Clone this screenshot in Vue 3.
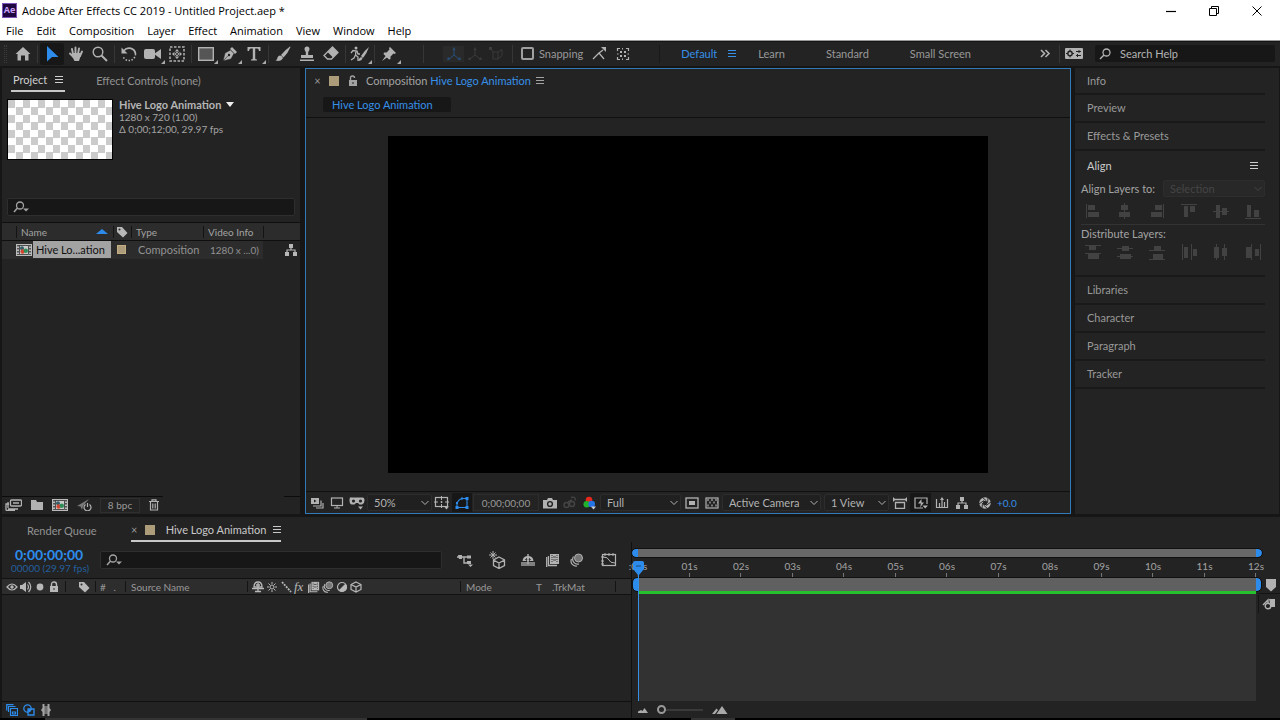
<script setup>
import { h, ref } from 'vue'

const glyphs = {
  logo: [15, 15, '<rect width="15" height="15" fill="#1f0740"/><rect x=".5" y=".5" width="14" height="14" fill="none" stroke="#7d55b8"/>'],
  minimize: [12, 12, '<path d="M1 6.500H11" stroke-width="1.200"/>'],
  restore: [12, 12, '<path d="M1.500 3.500H8.500V10.500H1.500ZM3.500 3.500V1.500H10.500V8.500H8.500"/>'],
  close: [12, 12, '<path d="M1.500 1.500L10.500 10.500M10.500 1.500L1.500 10.500"/>'],
  home: [16, 16, '<path d="M8 1L15.500 8H13.500V14.500H10V9.500H6V14.500H2.500V8H.5Z" fill="currentColor" stroke="none"/>'],
  arrow: [16, 16, '<path d="M3 0V15.500L8 11H14.500Z" fill="currentColor" stroke="none"/>'],
  hand: [16, 16, '<path d="M5 8L4 3M7.500 7.500V1.500M10 8L11 2.500M12 10L14 5.500M5.500 11L2 7.500" stroke-width="1.900" stroke-linecap="round"/><path d="M3.500 9L4.500 7H12.500L13 9L11 15H6.500Z" fill="currentColor" stroke="none"/>'],
  zoom: [16, 16, '<circle cx="6" cy="6" r="4.800" stroke-width="1.400"/><path d="M9.500 9.500L15 15" stroke-width="2"/>'],
  rotate: [16, 16, '<path d="M3 4.500A6.500 6.500 0 0 1 14.500 8" stroke-width="1.700"/><path d="M14.500 8A6.500 6.500 0 0 1 2 10.500" stroke-width="1.500" stroke-dasharray="1.500 1.500"/><path d="M.5 1.500V7.500H6.500Z" fill="currentColor" stroke="none"/>'],
  camera: [18, 16, '<rect x="0" y="3" width="11" height="10" rx="2" fill="currentColor" stroke="none"/><path d="M10 8L17 3V13Z" fill="currentColor" stroke="none"/>'],
  anchor: [16, 16, '<rect x="1" y="1" width="14" height="14" stroke-dasharray="2.500 1.500" stroke-width="1.500"/><path d="M8 3L10.200 5.500H5.800ZM8 13L10.200 10.500H5.800ZM3 8L5.500 5.800V10.200ZM13 8L10.500 5.800V10.200Z" fill="currentColor" stroke="none"/><circle cx="8" cy="8" r="1.500"/>'],
  rect: [16, 16, '<rect x=".7" y="1.700" width="14.600" height="12.600" fill="#555" stroke-width="1.400"/>'],
  pen: [16, 16, '<path d="M1 15L3 7L8.500 4L12 7.500L9 13L1 15L6 9.800" fill="currentColor" stroke="#232323" stroke-width=".6"/><path d="M10 1L15 6L13 8L8 3Z" fill="currentColor" stroke="none"/><circle cx="7" cy="9" r="1.200" fill="#232323" stroke="none"/>'],
  type: [16, 16, '<path d="M1.500 1H14.500V5H13Q12.700 2.600 11 2.600H9.200V12.500Q9.200 13.500 11 13.500V14.500H5V13.500Q6.800 13.500 6.800 12.500V2.600H5Q3.300 2.600 3 5H1.500Z" fill="currentColor" stroke="none"/>'],
  brush: [16, 16, '<path d="M15 .5Q10 4 6 9L8.500 11.500Q13 7 15.500 1Z" fill="currentColor" stroke="none"/><path d="M5 9.500Q8 10 7.800 12.500Q6 16 .5 14.500Q2.500 13.500 2.500 11.500Q3.300 9.700 5 9.500" fill="currentColor" stroke="none"/>'],
  stamp: [16, 16, '<path d="M5.500 3Q5.500 .5 8 .5T10.500 3Q10.500 4.500 9.200 6V9H14V12H2V9H6.800V6Q5.500 4.500 5.500 3M1 13.500H15V15H1Z" fill="currentColor" stroke="none"/>'],
  eraser: [16, 16, '<path d="M9.500 1L15 6.500L8.500 13H4.500L1 9.500Z" stroke-width="1.300"/><path d="M9.500 1L15 6.500L10 11.500L4.500 6Z" fill="currentColor" stroke="none"/>'],
  roto: [20, 16, '<circle cx="6" cy="2" r="1.500" fill="currentColor" stroke="none"/><path d="M1 7L3 4.500L7 5L8 8H10M6 5L5.500 9L8 11V15M5.500 9L4 12L1 14" stroke-width="1.300"/><path d="M19 1Q14 5 11 10L13 12Q17 7 19 1M11 11Q9 12 8 15Q12 15 12.500 12" fill="currentColor" stroke="none"/>'],
  pin: [16, 16, '<path d="M9 1L15 7L13.500 8L12.500 7.500L9.500 10.500L9.500 13L8 13.500L2.500 8L3 6.500H5.500L8.500 3.500L8 2ZM4.500 10L6 11.500L1 15Z" fill="currentColor" stroke="none"/>'],
  axis: [16, 16, '<path d="M8 3V9L3 13M8 9L13 13"/><path d="M6.500 4L8 1L9.500 4ZM1 14L2 11L4.500 13.500ZM15 14L14 11L11.500 13.500Z" fill="currentColor" stroke="none"/>'],
  viewaxis: [16, 16, '<path d="M2.500 2.500L5 6V13H10L14 9.500V3.500L10 6H5M10 6V13" stroke-width=".9"/><path d="M1 1H4V4H1Z" fill="currentColor" stroke="none"/>'],
  snap: [16, 16, '<path d="M2 13L8 7L13 13M8 7L12 4" stroke-width="1.300"/><path d="M10 1H15V6Z" fill="currentColor" stroke="none"/>'],
  snapbox: [16, 16, '<path d="M2.500 5V2.500H5M11 2.500H13.500V5M13.500 11V13.500H11M5 13.500H2.500V11" stroke-width="1.200"/><path d="M7.500 2V3.500M7.500 12.500V14M2 8H3.500M12.500 8H14"/><path d="M5 5H7V7H5ZM9 5H11V7H9ZM5 9H7V11H5ZM9 9H11V11H9Z" fill="currentColor" stroke="none"/>'],
  menu: [12, 12, '<path d="M2 2.500H10M2 5.500H10M2 8.500H10" stroke-width="1.200"/>'],
  more: [12, 12, '<path d="M2 2L5.500 5.500L2 9M6.500 2L10 5.500L6.500 9" stroke-width="1.600"/>'],
  settings: [18, 12, '<rect width="18" height="11" rx="1" fill="currentColor" stroke="none"/><circle cx="5" cy="5.500" r="2.200" stroke="#232323" stroke-width="1.400"/><path d="M5 1.500V3M5 8V9.500M1 5.500H3M7 5.500H9M11 3.500H16M11 7.500H16M14 2V5M12.500 6V9" stroke="#232323"/>'],
  search: [12, 12, '<circle cx="7.500" cy="4.500" r="3.500" stroke-width="1.300"/><path d="M5 7L1 11" stroke-width="1.500"/>'],
  searchmenu: [18, 12, '<circle cx="7" cy="4.500" r="3.500" stroke-width="1.300"/><path d="M4.500 7L1 11" stroke-width="1.500"/><path d="M10 7.500H16L13 10.500Z" fill="currentColor" stroke="none"/>'],
  lock: [12, 12, '<rect x="2" y="5" width="8" height="6" fill="currentColor" stroke="none"/><path d="M3.500 5V3Q3.500 1 5.500 1Q7.500 1 7.500 3" stroke-width="1.400"/><path d="M6 7V9" stroke="#232323"/>'],
  padlock: [12, 12, '<rect x="2" y="5" width="8" height="6" fill="currentColor" stroke="none"/><path d="M3.500 5V3.500Q3.500 1 6 1T8.500 3.500V5" stroke-width="1.400"/><path d="M6 7V9" stroke="#2d2d2d"/>'],
  tag: [12, 12, '<path d="M1 1H6L11.500 7L7 11.500L1 6Z" fill="currentColor" stroke="none"/><circle cx="3.500" cy="3.500" r="1" fill="#2d2d2d" stroke="none"/>'],
  film: [16, 12, '<rect x=".5" y=".5" width="15" height="11" fill="#bbb" stroke="#bbb"/><path d="M2 1V11M14 1V11" stroke="#333" stroke-width="1.500" stroke-dasharray="1.500 1.500"/><rect x="3.500" y="1.500" width="9" height="9" fill="#ccc" stroke="#333" stroke-width=".8"/><circle cx="6" cy="4.300" r="2" fill="#35606b" stroke="none"/><circle cx="6.600" cy="7.500" r="2.200" fill="#d4442f" stroke="none"/><circle cx="9.800" cy="6.800" r="2.200" fill="#2f8f5b" stroke="none"/>'],
  tree: [14, 12, '<path d="M5 0H9V4H5ZM1 8H5V12H1ZM9 8H13V12H9Z" fill="currentColor" stroke="none"/><path d="M7 4V6M3 8V6H11V8" stroke-width="1.200"/>'],
  interpret: [17, 12, '<rect x="5.500" y="1" width="11" height="6" rx="1" stroke-width="1.300"/><path d="M8 4H14M1 11.500V5H4M3 10H13M1 11.500H10M3 9V3" stroke-width="1.300"/>'],
  folder: [14, 12, '<path d="M1 1H6L7 3H13V11H1Z" fill="currentColor" stroke="none"/>'],
  plane: [16, 12, '<path d="M1 7L13 0L7 7L6 11L4.500 7.500Z" fill="currentColor" stroke="none" opacity=".6"/><path d="M9.500 5.500A3.500 3.500 0 1 0 13.500 5.500M11.500 4V8" stroke-width="1.200"/>'],
  trash: [12, 12, '<path d="M1 2.500H11M4 2V.8H8V2M2.500 3V11H9.500V3M4.800 4.500V9.500M7.200 4.500V9.500" stroke-width="1.200"/>'],
  preview: [14, 12, '<path d="M1 1H9V7H1Z" fill="currentColor" stroke="none"/><path d="M4 2.500L6.500 4L4 5.500" fill="#232323" stroke="none"/><path d="M3 9H11V3.500M6 11H13V6" stroke-width="1.200"/>'],
  monitor: [14, 12, '<rect x="1.500" y="1" width="11" height="7.500" stroke-width="1.200"/><path d="M7 9V11M4 11H10"/>'],
  goggles: [16, 14, '<path d="M2.500 1.500H13.500Q15.500 1.500 15.500 4.500T13 8.500H10.500L9 7H7L5.500 8.500H3Q.5 8.500 .5 4.500T2.500 1.500" fill="currentColor" stroke="none"/><circle cx="4.500" cy="5" r="1.600" fill="#232323" stroke="none"/><circle cx="11.500" cy="5" r="1.600" fill="#232323" stroke="none"/><path d="M9 10.500H14L11.500 13.500Z" fill="currentColor" stroke="none"/>'],
  chevron: [10, 10, '<path d="M1.500 3L5 6.500L8.500 3"/>'],
  grid: [16, 14, '<rect x="1.500" y="1.500" width="12" height="9" stroke-width="1.200"/><path d="M7.500 0V4M7.500 8V12M0 6H4M11 6H15M7.500 5V7M6.500 6H8.500" /><path d="M10 10.500H15L12.500 13.500Z" fill="currentColor" stroke="none"/>'],
  mask: [16, 14, '<path d="M3 11.500V8Q4 3 9 2.500H13V11.500Z" stroke-width="1.100"/><path d="M1.500 10H4.500V13H1.500ZM11.500 10H14.500V13H11.500ZM11.500 1H14.500V4H11.500ZM7 1.500H9V3.500H7ZM2 6H4V8H2Z" fill="currentColor" stroke="none"/>'],
  snapshot: [14, 12, '<path d="M0 3H4L5 1H9L10 3H14V11.500H0Z" fill="currentColor" stroke="none"/><circle cx="7" cy="7" r="2.400" stroke="#232323" stroke-width="1.400"/>'],
  showsnap: [14, 14, '<circle cx="3.500" cy="9" r="2.500" stroke-width="1.500"/><circle cx="9" cy="8" r="2.500" stroke-width="1.500"/><path d="M5 6L9 4M8 1.500Q12.500 0 12.500 4.500" stroke-width="1.500"/>'],
  channels: [14, 14, '<circle cx="6" cy="4" r="3.300" fill="#e8281c" stroke="none"/><circle cx="3.800" cy="8.300" r="3.300" fill="#21b12c" stroke="none"/><circle cx="8.700" cy="8" r="3.300" fill="#2673e8" stroke="none"/><path d="M8 10.500H13L10.500 13.500Z" fill="#ccc" stroke="none"/>'],
  region: [14, 12, '<rect x="1" y="1" width="12" height="10" stroke-width="1.300"/><rect x="4" y="4" width="6" height="4" fill="currentColor" stroke="none"/>'],
  checker: [14, 12, '<rect x="1" y="1" width="12" height="10" stroke-width="1.200"/><path d="M2 3H12M4 5.500H13M2 8.500H12" stroke-width="2" stroke-dasharray="2 2" opacity=".6"/>'],
  aspect: [16, 12, '<path d="M2 2.500H14M3.500 5.500H12.500V11.500H3.500Z" stroke-width="1.300"/><path d="M1 0V5L3.500 2.500ZM15 0V5L12.500 2.500Z" fill="currentColor" stroke="none"/>'],
  fast: [14, 12, '<path d="M13 7V1H1V11H9" stroke-width="1.200"/><path d="M7.500 2L4 6.500H7L6 10.500L10 5.500H7.500ZM8.500 8.500H14L11.200 11.500Z" fill="currentColor" stroke="none"/>'],
  chart: [14, 12, '<path d="M1.500 2V10.500H12.500V2M4.500 6V10M9.500 5V10M7 2V10" stroke-width="1.200"/><path d="M5 3L7 0L9 3Z" fill="currentColor" stroke="none"/>'],
  exposure: [14, 14, '<circle cx="7" cy="7" r="4" stroke-width="3.500"/><path d="M4 1L8.500 5M10 1.500L9.500 7M13 6L8 9.500M10 13L5.500 9M4 12.500L4.500 7M1 8L6 4.500" stroke="#232323" stroke-width=".9"/>'],
  flow: [18, 14, '<path d="M1 4H8M8 4V10H13M8 4H13" stroke-width="1.400"/><path d="M2 2H6V6H3ZM11 2.500H15V5.500H11ZM11 8H15V11H11ZM12 11.500H17L14.500 14Z" fill="currentColor" stroke="none"/>'],
  draft: [18, 18, '<path d="M5 0V8M1 4H9M2.500 1.500L7.500 6.500M7.500 1.500L2.500 6.500" /><path d="M11 6L16.500 9V14.500L11 17.500L5.500 14.500V9ZM5.500 9L11 12L16.500 9M11 12V17" stroke-width="1.300"/>'],
  shy: [16, 14, '<path d="M1 9H15V13H1Z" fill="currentColor" stroke="none" opacity=".65"/><path d="M2.500 8Q3 3 8 3T13.500 8Z" fill="currentColor" stroke="none"/><path d="M5 6.500H11M6.500 8V5M9.500 8V5" stroke="#333" stroke-width=".8"/><path d="M8 1V11" stroke-width="1.400"/>'],
  blend: [14, 14, '<path d="M4 1H13V11H4Z" fill="currentColor" stroke="none"/><path d="M2.500 3V12.500H11M.7 4V14" stroke-width="1.300"/><path d="M6 2V10M11 2V10" stroke="#333" stroke-dasharray="1 1"/><path d="M7 4H10M7 7H10" stroke="#444"/>'],
  motion: [14, 14, '<circle cx="8.500" cy="5" r="4" fill="#777"/><path d="M3.500 3.500A5 5 0 0 0 9 11M1.500 6A5 5 0 0 0 7 13" stroke-width="1.200"/>'],
  graph: [16, 14, '<rect x="1.500" y="1.500" width="13" height="11" stroke-width="1.200"/><path d="M2 4Q7 4 8 7T14 10M4 0V3M8 0V3M12 0V3M0 4H3M0 8H3M0 11H3"/>'],
  eye: [12, 12, '<path d="M1 6Q6 0 11 6Q6 12 1 6Z" stroke-width="1.200"/><circle cx="6" cy="6" r="1.700" fill="currentColor" stroke="none"/>'],
  speaker: [12, 12, '<path d="M0 4H2L6 1V11L2 8H0Z" fill="currentColor" stroke="none"/><path d="M7.500 3.500Q9.500 6 7.500 8.500M8.500 1Q13 6 8.500 11" stroke-width="1.200"/>'],
  dot: [12, 12, '<circle cx="6" cy="6" r="3.400" fill="currentColor" stroke="none"/>'],
  shysmall: [12, 12, '<path d="M2 6Q2 1 6 1T10 6Z" stroke-width="1.300"/><path d="M0 7.500H12M6 2V11M3 10.500H9M4 4H8" stroke-width="1.300"/>'],
  sun: [12, 12, '<circle cx="6" cy="6" r="2"/><path d="M6 1V3M6 9V11M1 6H3M9 6H11M2.500 2.500L4 4M8 8L9.500 9.500M9.500 2.500L8 4M4 8L2.500 9.500"/>'],
  slash: [12, 12, '<path d="M2 1L11 11" stroke-width="1.800" stroke-dasharray="2 1"/>'],
  contrast: [12, 12, '<circle cx="6" cy="6" r="4.500" stroke-width="1.200"/><path d="M9.500 2.500A4.800 4.800 0 0 1 2.500 9.500Z" fill="currentColor" stroke="none"/>'],
  cube: [12, 12, '<path d="M6 1L11 3.500V8.500L6 11L1 8.500V3.500ZM1 3.500L6 6L11 3.500M6 6V11" stroke-width="1.200"/>'],
  layers: [12, 12, '<path d="M4.500 4.500H11.500V11.500H4.500ZM2.500 8V2.500H9.500M.7 6.500V.7H7.500" stroke-width="1.200"/><path d="M6.500 8H9.500V10H6.500Z" stroke-width="1.200"/>'],
  modes: [12, 12, '<circle cx="4.500" cy="4.500" r="3.700" stroke-width="1.300"/><path d="M5 5H11V11H5Z" stroke-width="1.300"/><path d="M5 8Q8 8 8 5H5Z" fill="currentColor" stroke="none"/>'],
  braces: [12, 12, '<path d="M4.500 0V12H2.500V8L1 6L2.500 4V0ZM7.500 0V12H9.500V8L11 6L9.500 4V0Z" fill="currentColor" stroke="none"/><path d="M4 2H8V10H4Z" fill="currentColor" stroke="none" opacity=".6"/>'],
  mountsmall: [10, 6, '<path d="M0 6V4.500L3 3L4.500 4L6.500 1L10 6Z" fill="currentColor" stroke="none"/>'],
  mountbig: [16, 8, '<path d="M0 8L4.500 2.500L6 4L3 8ZM4.500 8L10 0L15.500 8Z" fill="currentColor" stroke="none"/>'],
  marker: [12, 14, '<path d="M1 1H11V9L6 13.500L1 9Z" fill="currentColor" stroke="none"/>'],
  bin: [14, 12, '<path d="M7 1H13V9H9Z" fill="currentColor" stroke="none"/><circle cx="6" cy="8" r="2.800" stroke-width="1.400"/><path d="M1 7L6 2V5" stroke-width="1.400"/>'],
  triangle: [10, 6, '<path d="M0 0H8L4 5Z" fill="currentColor" stroke="none"/>'],
  sortup: [12, 5, '<path d="M0 5L6 0L12 5Z" fill="currentColor" stroke="none"/>'],
  playhead: [11, 15, '<path d="M0 2Q0 0 2 0H9Q11 0 11 2V8L6 14H5L0 8Z" fill="#2d8ceb" stroke="none"/><path d="M3 5H8" stroke="#174a80"/>'],
  alignL: [16, 16, '<path d="M1.500 1V15"/><path d="M3 2H10V7H3ZM3 9H14V14H3Z" fill="currentColor" stroke="none"/>'],
  alignC: [16, 16, '<path d="M7.500 0V16"/><path d="M4 2H11V7H4ZM2 9H13V14H2Z" fill="currentColor" stroke="none"/>'],
  alignR: [16, 16, '<path d="M14.500 1V15"/><path d="M6 2H13V7H6ZM2 9H13V14H2Z" fill="currentColor" stroke="none"/>'],
  alignT: [16, 16, '<path d="M0 1.500H16"/><path d="M3 3H7V14H3ZM9 3H14V9H9Z" fill="currentColor" stroke="none"/>'],
  alignM: [16, 16, '<path d="M0 8.500H16"/><path d="M3 2H7V15H3ZM9 5H14V12H9Z" fill="currentColor" stroke="none"/>'],
  alignB: [16, 16, '<path d="M0 15.500H16"/><path d="M2 2H6V14H2ZM9 7H14V14H9Z" fill="currentColor" stroke="none"/>'],
  distT: [16, 16, '<path d="M0 1.500H16M0 9.500H16"/><path d="M4 2H11V6H4ZM3 10H14V15H3Z" fill="currentColor" stroke="none"/>'],
  distM: [16, 16, '<path d="M0 4.500H16M0 12.500H16"/><path d="M5 2H12V7H5ZM3 10H14V15H3Z" fill="currentColor" stroke="none"/>'],
  distB: [16, 16, '<path d="M0 6.500H16M0 15.500H16"/><path d="M5 2H12V6H5ZM4 10H14V15H4Z" fill="currentColor" stroke="none"/>'],
  distL: [16, 16, '<path d="M1.500 0V16M10.500 0V16"/><path d="M3 3H7V14H3ZM12 5H16V12H12Z" fill="currentColor" stroke="none"/>'],
  distC: [16, 16, '<path d="M3.500 0V16M11.500 0V16"/><path d="M1 3H6V14H1ZM9 4H14V12H9Z" fill="currentColor" stroke="none"/>'],
  distR: [16, 16, '<path d="M6.500 0V16M15.500 0V16"/><path d="M1 3H6V14H1ZM10 5H14V12H10Z" fill="currentColor" stroke="none"/>'],
}

const Icon = (props) => {
  const [w, ht, body] = glyphs[props.name]
  return h('svg', { viewBox: `0 0 ${w} ${ht}`, width: w, height: ht, fill: 'none', stroke: 'currentColor', 'aria-hidden': 'true', innerHTML: body })
}
Icon.props = ['name']

const menus = ['File', 'Edit', 'Composition', 'Layer', 'Effect', 'Animation', 'View', 'Window', 'Help']
const toolGroups = [
  [['home', 'Home']],
  [['arrow', 'Selection'], ['hand', 'Hand'], ['zoom', 'Zoom']],
  [['rotate', 'Rotation'], ['camera', 'Camera', 1], ['anchor', 'Pan Behind']],
  [['rect', 'Rectangle', 1], ['pen', 'Pen', 1], ['type', 'Type', 1]],
  [['brush', 'Brush'], ['stamp', 'Clone Stamp'], ['eraser', 'Eraser']],
  [['roto', 'Roto Brush', 1]],
  [['pin', 'Puppet Pin', 1]],
]
const alignTools = ['alignL', 'alignC', 'alignR', 'alignT', 'alignM', 'alignB']
const distTools = ['distT', 'distM', 'distB', 'distL', 'distC', 'distR']
const seconds = Array.from({ length: 13 }, (_, i) => ({
  label: (i ? '' : ':') + String(i).padStart(2, '0') + 's',
  left: (i / 12) * 100 + '%',
}))
const switches = ['shysmall', 'sun', 'slash', 'fx', 'blend', 'motion', 'contrast', 'cube']
const snapping = ref(false)
const tool = ref('arrow')
</script>

<template>
  <div class="app">
    <header class="titlebar">
      <span class="logo"><Icon name="logo" /><b>Ae</b></span>
      <span class="title">Adobe After Effects CC 2019 - Untitled Project.aep *</span>
      <button class="win" aria-label="Minimize"><Icon name="minimize" /></button>
      <button class="win" aria-label="Restore"><Icon name="restore" /></button>
      <button class="win" aria-label="Close"><Icon name="close" /></button>
    </header>
    <nav class="menubar">
      <button v-for="m in menus" :key="m">{{ m }}</button>
    </nav>

    <div class="toolbar">
      <i class="grip"></i>
      <template v-for="(g, gi) in toolGroups" :key="gi">
        <i v-if="gi" class="sep"></i>
        <button v-for="t in g" :key="t[0]" class="tool" :class="{ active: tool === t[0], more: t[2] }" :aria-label="t[1]" @click="tool = t[0]">
          <Icon :name="t[0]" />
        </button>
      </template>
      <i class="sep after-tools"></i>
      <div class="axes">
        <button aria-label="Local axis" class="local"><Icon name="axis" /></button>
        <button aria-label="World axis"><Icon name="axis" /></button>
        <button aria-label="View axis"><Icon name="viewaxis" /></button>
      </div>
      <i class="sep"></i>
      <label class="snapping"><input v-model="snapping" type="checkbox" />Snapping</label>
      <button class="tool" aria-label="Snap edges"><Icon name="snap" /></button>
      <button class="tool" aria-label="Snap collapsed"><Icon name="snapbox" /></button>
      <i class="sep before-spaces"></i>
      <nav class="spaces">
        <button class="on">Default</button>
        <button class="on" aria-label="Workspace menu"><Icon name="menu" /></button>
        <button>Learn</button>
        <button>Standard</button>
        <button>Small Screen</button>
      </nav>
      <button class="tool" aria-label="More workspaces"><Icon name="more" /></button>
      <i class="sep"></i>
      <button class="tool" aria-label="Workspace settings"><Icon name="settings" /></button>
      <label class="help"><Icon name="search" /><input type="text" placeholder="Search Help" aria-label="Search Help" /></label>
    </div>

    <main class="work">
      <section class="panel project">
        <div class="tabs">
          <div class="tab current"><span>Project</span><button aria-label="Project panel menu"><Icon name="menu" /></button></div>
          <button class="tab">Effect Controls (none)</button>
        </div>
        <div class="summary">
          <div class="thumb"></div>
          <div class="info">
            <strong>Hive Logo Animation <Icon name="triangle" /></strong>
            <span>1280 x 720 (1.00)</span>
            <span>Δ 0;00;12;00, 29.97 fps</span>
          </div>
        </div>
        <label class="field find"><Icon name="searchmenu" /><input type="text" aria-label="Search project" /></label>
        <table class="items">
          <thead>
            <tr>
              <th class="c-name"><span>Name<Icon name="sortup" /></span></th>
              <th class="c-tag"><Icon name="tag" /></th>
              <th class="c-type">Type</th>
              <th class="c-video">Video Info</th>
              <th></th>
            </tr>
          </thead>
          <tbody>
            <tr>
              <td><span class="item"><Icon name="film" /><em>Hive Lo...ation</em></span></td>
              <td><i class="swatch small"></i></td>
              <td>Composition</td>
              <td class="dims">1280 x ...0)</td>
              <td class="c-flow"><Icon name="tree" /></td>
            </tr>
          </tbody>
        </table>
        <div class="projfoot">
          <button aria-label="Interpret footage"><Icon name="interpret" /></button>
          <button aria-label="New folder"><Icon name="folder" /></button>
          <button aria-label="New composition"><Icon name="film" /></button>
          <button aria-label="Project settings"><Icon name="plane" /></button>
          <button class="bpc">8 bpc</button>
          <button aria-label="Delete"><Icon name="trash" /></button>
        </div>
      </section>

      <section class="panel comp">
        <div class="comptabs">
          <button class="x" aria-label="Close composition">×</button>
          <i class="swatch"></i>
          <Icon name="lock" />
          <span>Composition <a href="#">Hive Logo Animation</a></span>
          <button aria-label="Composition panel menu"><Icon name="menu" /></button>
        </div>
        <div class="crumbs"><button>Hive Logo Animation</button></div>
        <div class="stage"><div class="canvas"></div></div>
        <div class="compfoot">
          <button aria-label="Always preview"><Icon name="preview" /></button>
          <button aria-label="Primary viewer"><Icon name="monitor" /></button>
          <button aria-label="VR view"><Icon name="goggles" /></button>
          <label class="drop mag"><select aria-label="Magnification"><option>50%</option></select><Icon name="chevron" /></label>
          <button aria-label="Guides"><Icon name="grid" /></button>
          <button class="blue" aria-label="Mask visibility"><Icon name="mask" /></button>
          <button class="time">0;00;00;00</button>
          <button aria-label="Snapshot"><Icon name="snapshot" /></button>
          <button class="dim" aria-label="Show snapshot"><Icon name="showsnap" /></button>
          <button aria-label="Channels"><Icon name="channels" /></button>
          <label class="drop res"><select aria-label="Resolution"><option>Full</option></select><Icon name="chevron" /></label>
          <button class="wide" aria-label="Region of interest"><Icon name="region" /></button>
          <button aria-label="Transparency grid"><Icon name="checker" /></button>
          <label class="drop cam"><select aria-label="3D view"><option>Active Camera</option></select><Icon name="chevron" /></label>
          <label class="drop views"><select aria-label="View layout"><option>1 View</option></select><Icon name="chevron" /></label>
          <button class="wide" aria-label="Pixel aspect"><Icon name="aspect" /></button>
          <button class="wide pressed" aria-label="Fast previews"><Icon name="fast" /></button>
          <button class="wide" aria-label="Timeline"><Icon name="chart" /></button>
          <button aria-label="Flowchart"><Icon name="tree" /></button>
          <button class="expose" aria-label="Reset exposure"><Icon name="exposure" /></button>
          <span class="ev">+0.0</span>
        </div>
      </section>

      <aside class="panel side">
        <button class="fold">Info</button>
        <button class="fold">Preview</button>
        <button class="fold">Effects &amp; Presets</button>
        <div class="align">
          <header>Align<button aria-label="Align panel menu"><Icon name="menu" /></button></header>
          <div class="alignto">
            <label for="alignto">Align Layers to:</label>
            <span class="drop"><select id="alignto" disabled><option>Selection</option></select><Icon name="chevron" /></span>
          </div>
          <div class="aligns"><button v-for="a in alignTools" :key="a" :aria-label="a" disabled><Icon :name="a" /></button></div>
          <p>Distribute Layers:</p>
          <div class="aligns dist"><button v-for="a in distTools" :key="a" :aria-label="a" disabled><Icon :name="a" /></button></div>
        </div>
        <button class="fold">Libraries</button>
        <button class="fold">Character</button>
        <button class="fold">Paragraph</button>
        <button class="fold">Tracker</button>
      </aside>
    </main>

    <section class="panel timeline">
      <div class="tltabs">
        <button class="queue">Render Queue</button>
        <div class="tlcurrent">
          <button class="x" aria-label="Close timeline">×</button>
          <i class="swatch"></i>
          <span>Hive Logo Animation</span>
          <button aria-label="Timeline panel menu"><Icon name="menu" /></button>
        </div>
      </div>
      <div class="tlbody">
        <div class="layers">
          <div class="controls">
            <div class="clock"><b>0;00;00;00</b><small>00000 (29.97 fps)</small></div>
            <label class="field"><Icon name="searchmenu" /><input type="text" aria-label="Search layers" /></label>
            <div class="tlbuttons">
              <button class="apart" aria-label="Mini-flowchart"><Icon name="flow" /></button>
              <button class="apart" aria-label="Draft 3D"><Icon name="draft" /></button>
              <button aria-label="Hide shy layers"><Icon name="shy" /></button>
              <button aria-label="Frame blending"><Icon name="blend" /></button>
              <button class="graph-gap" aria-label="Motion blur"><Icon name="motion" /></button>
              <button aria-label="Graph editor"><Icon name="graph" /></button>
            </div>
          </div>
          <div class="cols">
            <span class="av"><Icon name="eye" /><Icon name="speaker" /><Icon name="dot" /><Icon name="padlock" /></span>
            <span class="num"><Icon name="tag" /></span>
            <span class="hash"># &nbsp; .</span>
            <span class="source">Source Name</span>
            <span class="switches">
              <template v-for="s in switches" :key="s"><i v-if="s === 'fx'" class="fx">fx</i><Icon v-else :name="s" /></template>
            </span>
            <span class="mode">Mode</span>
            <span class="trk"><span>T</span><span>.TrkMat</span></span>
          </div>
          <div class="rows"></div>
          <div class="tlfoot">
            <button class="blue" aria-label="Layer switches"><Icon name="layers" /></button>
            <button class="blue" aria-label="Transfer controls"><Icon name="modes" /></button>
            <button aria-label="In and out"><Icon name="braces" /></button>
          </div>
        </div>
        <div class="time-area">
          <div class="ruled">
            <div class="bar navigator"></div>
            <div class="ruler">
              <span v-for="s in seconds" :key="s.label" :style="{ left: s.left }">{{ s.label }}</span>
            </div>
            <div class="bar workarea"></div>
            <div class="tracks"></div>
            <div class="playhead"><Icon name="playhead" /></div>
          </div>
          <div class="edge">
            <button aria-label="Comp marker bin"><Icon name="marker" /></button>
            <button aria-label="Comp button"><Icon name="bin" /></button>
          </div>
          <div class="zoombar">
            <Icon name="mountsmall" />
            <input type="range" min="0" max="100" value="0" aria-label="Timeline zoom" />
            <Icon name="mountbig" />
          </div>
        </div>
      </div>
    </section>
    <footer class="strip"><i></i><i></i></footer>
  </div>
</template>

<style>
html, body { margin: 0; background: #161616; }
</style>

<style scoped>
* { box-sizing: border-box; }
.app {
  min-height: 100vh; display: flex; flex-direction: column;
  font-family: Lato, "Noto Sans", sans-serif; font-size: 11px; line-height: 14px; color: #a3a3a3; background: #161616;
}
button, input, select { font: inherit; color: inherit; background: none; border: 0; padding: 0; margin: 0; }
button { display: inline-flex; align-items: center; justify-content: center; white-space: nowrap; }
input, select { outline: none; min-width: 0; }
svg { flex: none; display: block; }
i { font-style: normal; flex: none; }
a { color: #3690e8; text-decoration: none; }
.blue { color: #2d8ceb; }

.titlebar { display: flex; align-items: center; height: 21px; padding-left: 2px; background: #fff; color: #000; font-family: "Open Sans", "Noto Sans", sans-serif; font-size: 11px; }
.logo { display: grid; margin-right: 5px; }
.logo > * { grid-area: 1 / 1; }
.logo b { color: #c9a1f5; font: bold 9px/14px "Open Sans", sans-serif; text-align: center; }
.title { flex: 1; font-size: 11px; }
.win { width: 43px; height: 20px; }
.win:last-child { margin-right: 2px; }
.menubar { display: flex; height: 20px; background: #fff; color: #000; border-bottom: 1px solid #999; font-family: "Open Sans", "Noto Sans", sans-serif; font-size: 11px; }
.menubar button { padding: 0 6px; margin-right: 1px; }

.toolbar { display: flex; align-items: center; height: 25px; padding-bottom: 1px; background: #232323; color: #b2b2b2; border-top: 1px solid #141414; }
.grip { width: 3px; height: 18px; margin: 0 4px; border: dotted #3c3c3c; border-width: 0 1px; }
.sep { width: 1px; height: 18px; margin: 0 2px; background: #363636; }
.tool { position: relative; flex: none; width: 24px; height: 22px; }
.tool.active { color: #2d8ceb; background: #171717; border-radius: 2px; }
.tool.more::after { content: ""; position: absolute; right: 0; bottom: 1px; border: 2px solid transparent; border-right-color: #aaa; border-bottom-color: #aaa; }
.after-tools { margin-left: 22px; }
.axes { display: flex; padding: 0 4px 0 17px; color: #3c3c3c; }
.axes button { width: 21px; }
.axes .local { color: #27517c; background: #2a2a2a; }
.snapping { display: flex; align-items: center; gap: 5px; margin: 0 4px; color: #999; }
.snapping input { appearance: none; width: 13px; height: 13px; margin-left: 2px; border: 2px solid #a0a0a0; border-radius: 2px; }
.before-spaces { margin: 0 21px 0 24px; background: #191919; }
.spaces { display: flex; gap: 41px; flex: 1; color: #999; }
.spaces .on { color: #3690e8; }
.spaces .on + .on { margin: 0 -21px 0 -32px; }
.help { display: flex; align-items: center; gap: 9px; width: 180px; height: 17px; margin: 0 5px 0 9px; padding-left: 4px; background: #171717; border-radius: 2px; }
.help input { flex: 1; }
.help input::placeholder { color: #b4b4b4; opacity: 1; }

.work { flex: 1; display: flex; min-height: 446px; padding: 2px 1px 0 2px; }
.panel { background: #232323; }
.project { display: flex; flex-direction: column; width: 298px; }
.tabs { display: flex; gap: 31px; padding: 0 9px; height: 24px; }
.tab { height: 24px; padding-top: 2px; color: #929292; }
.tab.current { display: flex; align-items: center; gap: 6px; padding: 2px 0 0 2px; color: #d0d0d0; border-bottom: 2px solid #c8c8c8; }
.summary { display: flex; gap: 6px; padding: 7px 5px 0; height: 106px; }
.thumb { width: 106px; height: 61px; border: 1px solid #000; background: repeating-conic-gradient(#fff 0 25%, #cbcbcb 0 50%) 0 0 / 15px 15px; }
.info { display: flex; flex-direction: column; font-size: 10px; line-height: 12px; }
.info strong { display: flex; align-items: center; gap: 5px; font-size: 11px; color: #b5b5b5; }
.info strong svg { color: #eee; }
.field { display: flex; align-items: center; height: 18px; padding-left: 5px; background: #171717; border: 1px solid #2e2e2e; border-radius: 2px; }
.field input { flex: 1; }
.find { margin: 0 5px 6px; }
.items { width: 100%; table-layout: fixed; border-collapse: collapse; border-top: 1px solid #0f0f0f; font-size: 11px; }
.items th { height: 18px; padding: 0 0 0 5px; text-align: left; font-size: 10px; font-weight: 400; background: linear-gradient(90deg, #141414 1px, #2c2c2c 1px) 0 3px / 100% 12px no-repeat #2c2c2c; border-bottom: 1px solid #0f0f0f; }
.items .c-name { width: 111px; background-position: 14px 3px; }
.items .c-name span { display: flex; justify-content: space-between; align-items: center; padding: 0 5px 0 14px; }
.c-name svg { color: #2d8ceb; }
.c-tag { width: 18px; color: #b8b8b8; }
.items .c-tag { padding-left: 3px; }
.c-type { width: 72px; }
.c-video { width: 60px; }
.items td { height: 18px; padding: 0 0 0 7px; background: #2c2c2c; white-space: nowrap; color: #929292; }
.items td:first-child { padding: 0; }
.items td:nth-child(2) { padding-left: 4px; }
.items td.dims { font-size: 10px; }
.items td.c-flow { padding: 0 2px; color: #b8b8b8; background: #232323; }
.c-flow svg { margin-left: auto; }
.item { display: flex; align-items: center; gap: 1px; padding-left: 14px; }
.item em { flex: 1; height: 17px; padding: 2px 3px; margin-right: 2px; font-style: normal; color: #111; background: #a3a3a3; }
.swatch { display: block; width: 10px; height: 10px; background: #ad9c79; }
.small { width: 9px; height: 9px; border: 1px solid #c3ad83; }
.projfoot {
  display: flex; align-items: center; gap: 8px; height: 18px; margin-top: auto; padding-left: 3px; color: #b2b2b2;
  background: linear-gradient(90deg, #0c0c0c 161px, transparent 161px calc(100% - 16px), #0c0c0c 0) 0 0 / 100% 1px no-repeat;
}
.projfoot .bpc { width: 40px; height: 15px; font-size: 10px; color: #999; border: 1px solid #2f2f2f; }

.comp { display: flex; flex-direction: column; flex: 1; min-width: 0; margin: 0 4px 0 5px; border: 1px solid #3279b7; }
.comptabs { display: flex; align-items: center; height: 24px; padding-left: 8px; }
.comptabs .swatch { margin: 0 8px; }
.comptabs span { margin: 0 3px 0 7px; }
.x { width: 7px; color: #999; }
.crumbs { height: 25px; padding: 4px 17px 0; border-bottom: 1px solid #101010; }
.crumbs button { width: 128px; height: 15px; padding-left: 9px; justify-content: flex-start; color: #3690e8; background: #171717; border-radius: 2px; }
.stage { flex: 1; padding: 18px 82px; }
.canvas { height: 100%; background: #000; }
.compfoot { display: flex; align-items: center; height: 22px; padding-left: 1px; border-top: 1px solid #101010; color: #b2b2b2; }
.compfoot > button { flex: none; width: 20px; height: 19px; }
.compfoot > .wide { width: 21px; }
.drop { position: relative; display: block; flex: none; }
.drop select { appearance: none; display: block; width: 100%; height: 17px; padding: 0 18px 0 6px; border: 1px solid #2d2d2d; border-radius: 2px; background: #202020; opacity: 1; }
.drop svg { position: absolute; right: 2px; top: 4px; pointer-events: none; }
.mag { width: 65px; }
.res { width: 81px; }
.cam { width: 99px; }
.views { width: 65px; margin: 0 0 0 3px; }
.compfoot .blue, .compfoot .pressed { background: #171717; }
.compfoot .time { width: 66px; height: 17px; margin: 0 1px; border: 1px solid #2d2d2d; color: #999; font-size: 10px; }
.compfoot .dim { color: #444; }
.compfoot .expose { margin-left: 3px; }
.ev { margin-left: 2px; color: #3690e8; font-size: 10px; }

.side { display: flex; flex-direction: column; width: 204px; }
.fold { width: 190px; height: 28px; padding: 0 0 0 12px; justify-content: flex-start; border-bottom: 2px solid #191919; color: #999; }
.fold:first-child { height: 27px; }
.align { width: 190px; height: 126px; padding: 0 0 0 6px; border-bottom: 2px solid #191919; }
.align header { display: flex; justify-content: space-between; height: 29px; align-items: center; padding: 0 5px 0 6px; color: #ccc; }
.alignto { display: flex; justify-content: space-between; align-items: center; margin-bottom: 6px; }
.alignto select { width: 102px; color: #454545; background: #282828; }
.alignto svg { color: #454545; }
.aligns { display: flex; justify-content: space-between; padding: 0 4px 5px; color: #424242; border-bottom: 1px solid #333; }
.align p { margin: 2px 0 3px; }
.dist { border: 0; }

.timeline { display: flex; flex-direction: column; height: 201px; margin: 3px 0 0 2px; }
.tltabs { display: flex; gap: 34px; height: 25px; padding-left: 25px; align-items: flex-end; }
.queue { height: 22px; color: #929292; }
.tlcurrent { display: flex; align-items: center; height: 22px; padding-bottom: 1px; border-bottom: 2px solid #c8c8c8; color: #c8c8c8; width: 150px; }
.tlcurrent .swatch { margin: 0 11px 0 7px; }
.tlcurrent span { flex: 1; }
.tlcurrent button:last-child { margin-right: -2px; }
.tlbody { flex: 1; display: flex; min-height: 0; }
.layers { display: flex; flex-direction: column; flex: 0 1 630px; border-right: 1px solid #101010; }
.controls { display: flex; align-items: center; height: 36px; }
.clock { width: 98px; padding-left: 9px; }
.clock b { display: block; padding-left: 4px; font-size: 14px; color: #2d8ceb; line-height: 15px; }
.clock small { display: block; font-size: 10px; line-height: 12px; color: #235f9d; white-space: nowrap; }
.controls .field { width: 342px; }
.tlbuttons { display: flex; flex: 1; align-items: center; gap: 10px; padding-left: 14px; color: #b2b2b2; }
.apart { margin-right: 4px; }
.graph-gap { margin-right: 7px; }
.cols { display: flex; height: 17px; border: solid #111; border-width: 1px 0; background: #2d2d2d; font-size: 10px; color: #999; }
.cols > span { display: flex; align-items: center; background: linear-gradient(#141414, #141414) 100% 50% / 1px 11px no-repeat; }
.av { width: 64px; gap: 2px; padding-left: 4px; color: #b8b8b8; }
.num { width: 30px; padding-left: 12px; color: #b8b8b8; }
.hash { width: 30px; padding-left: 4px; white-space: nowrap; }
.source { width: 122px; padding-left: 5px; }
.switches { width: 213px; gap: 2px; padding-left: 4px; color: #b8b8b8; }
.switches svg { width: 12px; height: 12px; }
.switches .fx { width: 12px; font: italic 13px/12px "Liberation Serif", serif; }
.mode { width: 75px; padding-left: 5px; }
.cols .mode { background: none; }
.trk { width: 80px; gap: 10px; }
.rows { flex: 1; }
.tlfoot, .zoombar { display: flex; align-items: center; height: 17px; border-top: 1px solid #101010; }
.tlfoot { padding-left: 2px; gap: 1px; }
.tlfoot button { width: 16px; height: 15px; }

.time-area { flex: 1; display: grid; grid-template: 1fr 17px / 1fr 22px; min-width: 0; padding-left: 6px; }
.ruled { position: relative; display: flex; flex-direction: column; margin-right: 2px; padding-top: 7px; }
.bar { background: #686868; border: solid #2d8ceb; border-width: 0 6px; margin: 0 -6px; outline: 1px solid #111; }
.navigator { height: 8px; border-radius: 4px; }
.ruler { position: relative; height: 21px; font-size: 10px; }
.ruler span { position: absolute; top: 3px; height: 17px; transform: translateX(-50%); background: linear-gradient(#777, #777) 50% 100% / 1px 4px no-repeat; line-height: 13px; }
.workarea { height: 13px; margin: 0 -5px; border-width: 0 5px; border-radius: 4px; background: #606060; }
.tracks { flex: 1; background: #323232; border-top: 3px solid #25c22e; }
.playhead { position: absolute; left: -5px; top: 19px; bottom: 0; background: linear-gradient(#3690e8, #3690e8) 5px 0 / 1px 100% no-repeat; }
.edge { padding-top: 34px; }
.edge button { width: 22px; height: 18px; color: #b2b2b2; padding-left: 4px; border-bottom: 1px solid #141414; }
.edge button:last-child { border-left: 1px solid #141414; border-bottom: 0; width: 20px; padding: 0; }
.zoombar { justify-self: start; width: 90px; gap: 9px; color: #aaa; border-top: 0; }
.zoombar input { appearance: none; flex: 1; width: 0; height: 2px; background: #3a3a3a; }
.zoombar input::-webkit-slider-thumb { appearance: none; width: 9px; height: 9px; border: 2px solid #999; border-radius: 50%; background: #232323; }
.strip { display: flex; height: 2px; background: #000; padding-left: 45px; gap: 324px; }
.strip i { width: 322px; background: #333; }
.strip i + i { width: 44px; }
</style>
